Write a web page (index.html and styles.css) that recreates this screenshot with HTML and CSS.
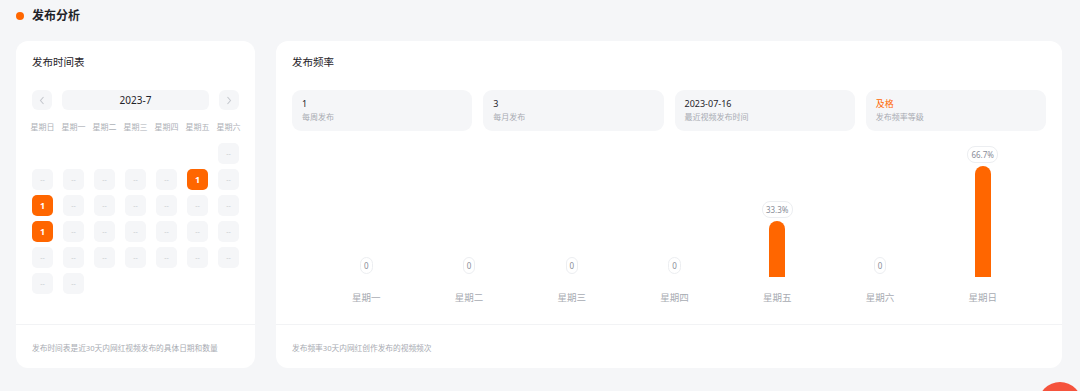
FILE: index.html
```html
<!DOCTYPE html>
<html lang="zh-CN">
<head>
  <meta charset="UTF-8">
  <title>发布分析</title>
  <link rel="stylesheet" href="styles.css">
</head>
<body>
  <div class="page">
    <div class="section-title"><span class="dot"></span>发布分析</div>
    <div class="cards">
      <!-- 发布时间表 -->
      <div class="card card-left">
        <div class="card-head">发布时间表</div>
        <div class="card-body">
          <div class="month-nav">
            <span class="nav-btn">
              <svg width="6" height="9" viewBox="0 0 6 9"><path d="M4.5 1 L1.5 4.5 L4.5 8" fill="none" stroke="#c5c8ce" stroke-width="1.1"/></svg>
            </span>
            <span class="month">2023-7</span>
            <span class="nav-btn">
              <svg width="6" height="9" viewBox="0 0 6 9"><path d="M1.5 1 L4.5 4.5 L1.5 8" fill="none" stroke="#c5c8ce" stroke-width="1.1"/></svg>
            </span>
          </div>
          <div class="week-head">
            <span>星期日</span><span>星期一</span><span>星期二</span><span>星期三</span><span>星期四</span><span>星期五</span><span>星期六</span>
          </div>
          <div class="days">
            <span class="blank"></span><span class="blank"></span><span class="blank"></span><span class="blank"></span><span class="blank"></span><span class="blank"></span>
            <span class="day">--</span>
            <span class="day">--</span><span class="day">--</span><span class="day">--</span><span class="day">--</span><span class="day">--</span><span class="day on">1</span><span class="day">--</span>
            <span class="day on">1</span><span class="day">--</span><span class="day">--</span><span class="day">--</span><span class="day">--</span><span class="day">--</span><span class="day">--</span>
            <span class="day on">1</span><span class="day">--</span><span class="day">--</span><span class="day">--</span><span class="day">--</span><span class="day">--</span><span class="day">--</span>
            <span class="day">--</span><span class="day">--</span><span class="day">--</span><span class="day">--</span><span class="day">--</span><span class="day">--</span><span class="day">--</span>
            <span class="day">--</span><span class="day">--</span>
          </div>
        </div>
        <div class="card-foot">发布时间表是近30天内网红视频发布的具体日期和数量</div>
      </div>

      <!-- 发布频率 -->
      <div class="card card-right">
        <div class="card-head">发布频率</div>
        <div class="card-body">
          <div class="stats">
            <div class="stat"><div class="stat-val">1</div><div class="stat-label">每周发布</div></div>
            <div class="stat"><div class="stat-val">3</div><div class="stat-label">每月发布</div></div>
            <div class="stat"><div class="stat-val">2023-07-16</div><div class="stat-label">最近视频发布时间</div></div>
            <div class="stat"><div class="stat-val level">及格</div><div class="stat-label">发布频率等级</div></div>
          </div>
          <div class="chart">
            <div class="col"><span class="pill">0</span><span class="bar"></span><span class="axis">星期一</span></div>
            <div class="col"><span class="pill">0</span><span class="bar"></span><span class="axis">星期二</span></div>
            <div class="col"><span class="pill">0</span><span class="bar"></span><span class="axis">星期三</span></div>
            <div class="col"><span class="pill">0</span><span class="bar"></span><span class="axis">星期四</span></div>
            <div class="col"><span class="pill">33.3%</span><span class="bar" style="height: 56px"></span><span class="axis">星期五</span></div>
            <div class="col"><span class="pill">0</span><span class="bar"></span><span class="axis">星期六</span></div>
            <div class="col"><span class="pill">66.7%</span><span class="bar" style="height: 111px"></span><span class="axis">星期日</span></div>
          </div>
        </div>
        <div class="card-foot">发布频率30天内网红创作发布的视频频次</div>
      </div>
    </div>
  </div>
  <div class="float-btn"></div>
</body>
</html>
```

FILE: styles.css
```css
* {
  padding: 0;
  margin: 0;
  box-sizing: border-box;
}
body {
  background: #f5f6f8;
  font-family: "Noto Sans", "Noto Sans CJK SC", sans-serif;
  color: #1f2329;
  overflow: hidden;
}
.page {
  padding: 0 18px 0 16px;
}
.section-title {
  display: flex;
  align-items: center;
  height: 32px;
  font-size: 12px;
  font-weight: 700;
  line-height: 16px;
  margin-bottom: 9px;
}
.section-title .dot {
  width: 8px;
  height: 8px;
  border-radius: 50%;
  background: #ff6600;
  margin-right: 8px;
}
.cards {
  display: flex;
  gap: 21px;
  height: 327px;
}
.card {
  background: #fff;
  border-radius: 12px;
  display: flex;
  flex-direction: column;
}
.card-left {
  width: 239px;
}
.card-right {
  flex: 1;
}
.card-head {
  padding: 13px 16px 0;
  height: 49px;
  font-size: 10.5px;
  line-height: 16px;
}
.card-body {
  flex: 1;
  padding: 0 16px;
}
.card-foot {
  border-top: 1px solid #f2f3f5;
  padding: 17px 16px 0;
  height: 44px;
  font-size: 7.7px;
  line-height: 12px;
  color: #a8abb2;
}

/* 日历 */
.month-nav {
  display: flex;
  gap: 10px;
  height: 20px;
}
.nav-btn {
  width: 20px;
  height: 20px;
  border-radius: 6px;
  background: #f5f6f8;
  display: flex;
  align-items: center;
  justify-content: center;
}
.month {
  flex: 1;
  border-radius: 6px;
  background: #f5f6f8;
  font-size: 10px;
  line-height: 20px;
  text-align: center;
}
.week-head,
.days {
  display: grid;
  grid-template-columns: repeat(7, 21px);
  column-gap: 10px;
}
.week-head {
  margin-top: 11px;
  height: 12px;
}
.week-head span {
  display: flex;
  justify-content: center;
  white-space: nowrap;
  font-size: 8px;
  line-height: 12px;
  color: #aeb1b7;
}
.days {
  margin-top: 10px;
  row-gap: 5px;
}
.days span {
  height: 21px;
}
.day {
  border-radius: 5px;
  background: #f5f6f8;
  font-size: 7px;
  line-height: 21px;
  text-align: center;
  color: #c8cbd0;
}
.day.on {
  background: #ff6600;
  color: #fff;
  font-size: 9px;
  font-weight: 700;
}

/* 频率 */
.stats {
  display: flex;
  gap: 11px;
  height: 41px;
}
.stat {
  flex: 1;
  background: #f5f6f8;
  border-radius: 9px;
  padding: 7px 10px 0;
}
.stat-val {
  font-size: 9px;
  line-height: 14px;
}
.stat-val.level {
  color: #ff6600;
}
.stat-label {
  font-size: 8px;
  line-height: 12px;
  color: #a8abb2;
}
.chart {
  display: flex;
  height: 193px;
  padding: 0 12px 19px 23px;
}
.col {
  flex: 1;
  display: flex;
  flex-direction: column;
  align-items: center;
  justify-content: flex-end;
}
.pill {
  height: 17px;
  min-width: 11px;
  padding: 0 3px;
  border: 1px solid #eceef1;
  border-radius: 8px;
  font-size: 8px;
  line-height: 15px;
  color: #8a8e99;
  margin-bottom: 3px;
}
.bar {
  width: 16px;
  height: 0;
  background: #ff6600;
  border-radius: 8px 8px 0 0;
}
.axis {
  margin-top: 14px;
  font-size: 9.5px;
  line-height: 14px;
  color: #a8abb2;
}
.float-btn {
  position: fixed;
  left: 1038px;
  top: 382px;
  width: 44px;
  height: 44px;
  border-radius: 50%;
  background: #f5533d;
}
```
